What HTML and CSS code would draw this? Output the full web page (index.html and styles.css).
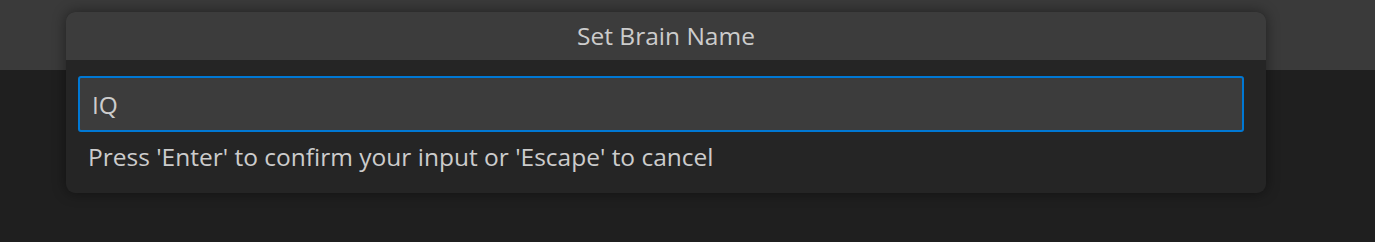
FILE: index.html
```html
<!DOCTYPE html>
<html lang="en">
<head>
    <meta charset="UTF-8">
    <title>Set Brain Name</title>
    <link rel="stylesheet" href="styles.css">
</head>
<body>
    <div class="topbar"></div>
    <div class="editor"></div>

    <!-- Quick input overlay -->
    <div class="quick-input">
        <div class="quick-title">Set Brain Name</div>
        <div class="quick-body">
            <div class="quick-field">
                <input type="text" class="quick-box" value="IQ" spellcheck="false">
            </div>
            <div class="quick-message">Press 'Enter' to confirm your input or 'Escape' to cancel</div>
        </div>
    </div>
</body>
</html>
```

FILE: styles.css
```css
body {
    margin: 0;
    height: 242px;
    display: flex;
    flex-direction: column;
    background-color: #1f1f1f;
    font-family: 'Open Sans', 'Noto Sans', sans-serif;
    color: #cccccc;
    overflow: hidden;
}
.topbar {
    height: 70px;
    background-color: #3a3a3a;
}
.editor {
    flex: 1;
    background-color: #1f1f1f;
}
.quick-input {
    position: absolute;
    left: 66px;
    top: 12px;
    width: 1200px;
    border-radius: 9px;
    overflow: hidden;
    background-color: #252525;
    box-shadow: 0 0 14px rgba(0,0,0,0.45);
}
.quick-title {
    height: 48px;
    line-height: 48px;
    text-align: center;
    background-color: #3c3c3c;
    font-size: 24.5px;
}
.quick-body {
    padding: 16px 22px 0 12px;
    height: 133px;
    box-sizing: border-box;
}
.quick-box {
    display: block;
    width: 100%;
    height: 56px;
    box-sizing: border-box;
    margin: 0;
    padding: 0 12px;
    border: 2px solid #0078d4;
    border-radius: 3px;
    background-color: #3c3c3c;
    color: #cccccc;
    font-family: inherit;
    font-size: 24.5px;
    outline: none;
}
.quick-message {
    padding: 8px 10px 0;
    font-size: 24.5px;
    line-height: 34px;
}
```
